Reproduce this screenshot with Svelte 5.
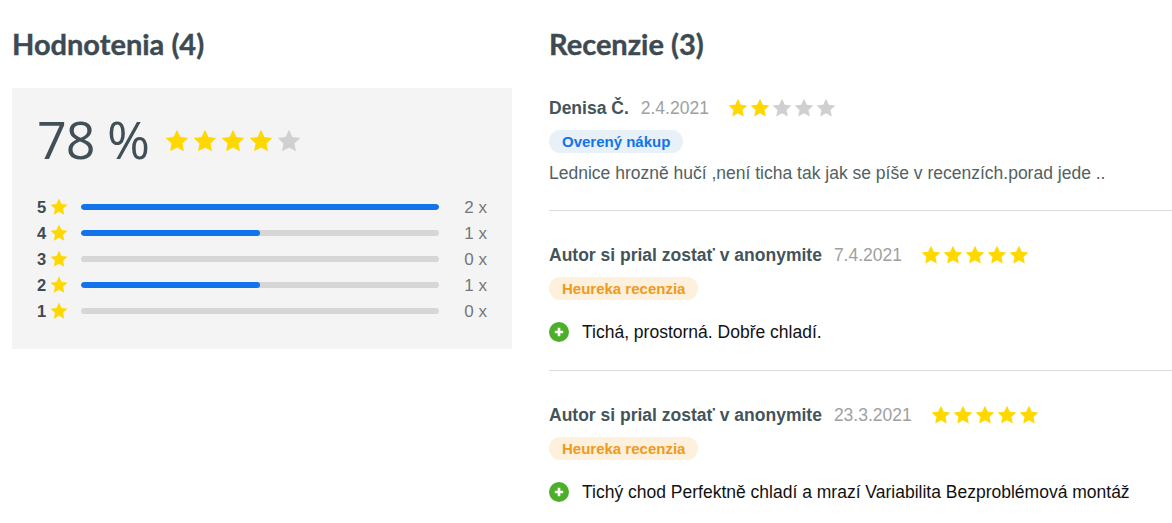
<script>
  const bars = [
    { stars: 5, count: 2, fill: 100 },
    { stars: 4, count: 1, fill: 50 },
    { stars: 3, count: 0, fill: 0 },
    { stars: 2, count: 1, fill: 50 },
    { stars: 1, count: 0, fill: 0 },
  ];

  const reviews = [
    {
      author: 'Denisa Č.',
      date: '2.4.2021',
      rating: 2,
      badge: 'Overený nákup',
      kind: 'verified',
      text: 'Lednice hrozně hučí ,není ticha tak jak se píše v recenzích.porad jede ..',
    },
    {
      author: 'Autor si prial zostať v anonymite',
      date: '7.4.2021',
      rating: 5,
      badge: 'Heureka recenzia',
      kind: 'heureka',
      pro: 'Tichá, prostorná. Dobře chladí.',
    },
    {
      author: 'Autor si prial zostať v anonymite',
      date: '23.3.2021',
      rating: 5,
      badge: 'Heureka recenzia',
      kind: 'heureka',
      pro: 'Tichý chod Perfektně chladí a mrazí Variabilita Bezproblémová montáž',
    },
  ];

  const starPath = 'M12 .8l3.4 7.3 7.9.9-5.9 5.4 1.6 7.9L12 18.4l-7 3.9 1.6-7.9L.7 9l7.9-.9z';
</script>

{#snippet star(on, size)}
  <svg class="star" class:on width={size} height={size} viewBox="0 0 24 24" aria-hidden="true">
    <path d={starPath} />
  </svg>
{/snippet}

<main class="page">
  <section class="ratings">
    <h2>Hodnotenia (4)</h2>
    <div class="panel">
      <div class="score">
        <span class="percent">78 %</span>
        <div class="stars big">
          {#each [1, 2, 3, 4, 5] as n}
            {@render star(n <= 4, 24)}
          {/each}
        </div>
      </div>
      <ul class="bars">
        {#each bars as bar}
          <li>
            <span class="num">{bar.stars}</span>
            {@render star(true, 18)}
            <span class="track"><span class="fill" style="width: {bar.fill}%"></span></span>
            <span class="count">{bar.count} x</span>
          </li>
        {/each}
      </ul>
    </div>
  </section>

  <section class="reviews">
    <h2>Recenzie (3)</h2>
    {#each reviews as review}
      <article class="review">
        <div class="head">
          <strong>{review.author}</strong>
          <span class="date">{review.date}</span>
          <div class="stars">
            {#each [1, 2, 3, 4, 5] as n}
              {@render star(n <= review.rating, 20)}
            {/each}
          </div>
        </div>
        <span class="badge {review.kind}">{review.badge}</span>
        {#if review.text}
          <p class="text">{review.text}</p>
        {/if}
        {#if review.pro}
          <p class="pro">
            <svg width="20" height="20" viewBox="0 0 20 20" aria-hidden="true">
              <circle cx="10" cy="10" r="10" fill="#4caf29" />
              <path d="M10 5.8v8.4M5.8 10h8.4" stroke="#fff" stroke-width="2.6" />
            </svg>
            {review.pro}
          </p>
        {/if}
      </article>
    {/each}
  </section>
</main>

<style>
  :global(body) {
    margin: 0;
    background: #fff;
    overflow: hidden;
  }
  .page {
    display: grid;
    grid-template-columns: 500px 1fr;
    column-gap: 37px;
    padding: 27px 0 0 12px;
    font-family: "Liberation Sans", Arial, sans-serif;
    color: #414f57;
    height: 496px;
    overflow: hidden;
  }
  h2 {
    margin: 0 0 28px;
    font-family: Lato, sans-serif;
    font-size: 29px;
    line-height: 33px;
    font-weight: 700;
    color: #3d4a52;
    -webkit-text-stroke: 0.4px #3d4a52;
  }
  .panel {
    background: #f4f4f4;
    height: 261px;
    box-sizing: border-box;
    padding: 19px 25px 0 25px;
  }
  .score {
    display: flex;
    align-items: center;
    gap: 16px;
    height: 64px;
  }
  .percent {
    font-family: "Open Sans", sans-serif;
    font-weight: 400;
    font-size: 52px;
    letter-spacing: -1px;
    line-height: 64px;
    color: #414f57;
  }
  .stars {
    display: flex;
    gap: 2px;
  }
  .stars.big {
    gap: 4px;
    margin-top: 4px;
  }
  .star {
    display: block;
    flex: none;
    fill: #d0d0d0;
  }
  .star.on {
    fill: #ffd800;
  }
  .bars {
    list-style: none;
    margin: 23px 0 0;
    padding: 0;
  }
  .bars li {
    display: flex;
    align-items: center;
    height: 26px;
  }
  .num {
    width: 13px;
    padding-top: 1px;
    font-size: 16.5px;
    font-weight: 700;
    color: #3f4a52;
  }
  .track {
    flex: none;
    width: 358px;
    height: 6px;
    margin-left: 13px;
    border-radius: 3px;
    background: #d6d6d6;
    overflow: hidden;
  }
  .fill {
    display: block;
    height: 100%;
    border-radius: 3px;
    background: #1273eb;
  }
  .count {
    margin-left: auto;
    padding-top: 2px;
    font-size: 17px;
    color: #777;
  }
  .review {
    height: 160px;
    box-sizing: border-box;
    border-bottom: 1px solid #dcdcdc;
  }
  .review:first-of-type {
    height: 127px;
    padding-top: 12px;
  }
  .review + .review {
    padding-top: 32px;
  }
  .review:last-child {
    border-bottom: 0;
  }
  .reviews h2 {
    margin-bottom: 24px;
  }
  .head {
    display: flex;
    align-items: center;
    height: 24px;
    font-size: 17.5px;
  }
  .head strong {
    color: #43545a;
  }
  .date {
    margin-left: 12px;
    color: #a0a0a0;
  }
  .head .stars {
    margin-left: 19px;
    gap: 2px;
  }
  .badge {
    display: block;
    width: fit-content;
    margin-top: 10px;
    padding: 0 13px;
    height: 23px;
    line-height: 23px;
    border-radius: 12px;
    font-size: 15px;
    font-weight: 700;
  }
  .badge.verified {
    background: #e8f0f8;
    color: #1273eb;
  }
  .badge.heureka {
    background: #fdf0dc;
    color: #f09a1a;
  }
  .text {
    margin: 9px 0 0;
    font-size: 17.5px;
    line-height: 22px;
    color: #51625f;
  }
  .pro {
    display: flex;
    align-items: center;
    gap: 13px;
    margin: 22px 0 0;
    font-size: 17.5px;
    line-height: 20px;
    color: #111;
  }
</style>
